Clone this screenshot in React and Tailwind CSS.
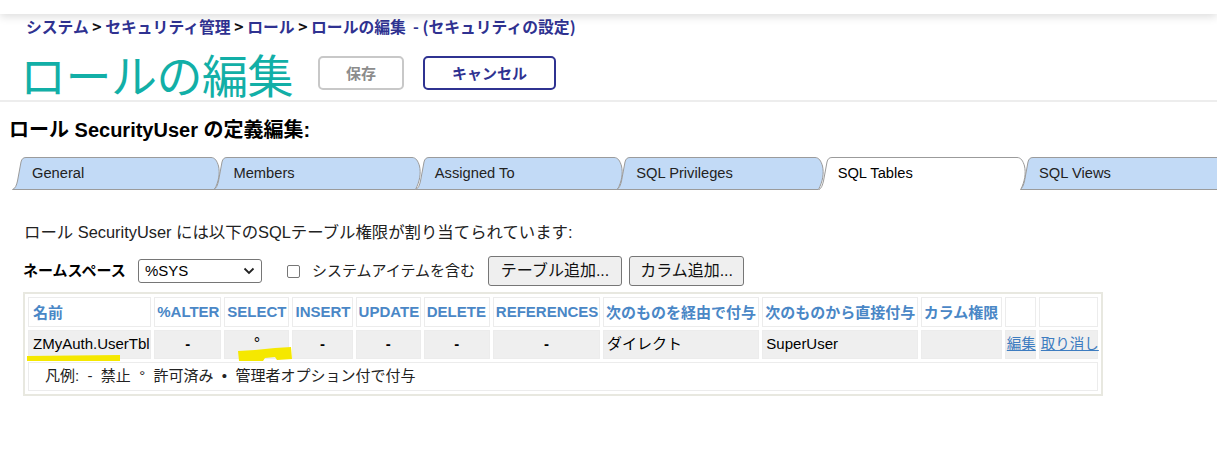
import React from "react";

const TABS = ["General", "Members", "Assigned To", "SQL Privileges", "SQL Tables", "SQL Views"];

function Tab({ label, active, first }) {
  return (
    <div
      className={`relative h-[33px] w-[211px] shrink-0 flex items-center pl-[20px] ${first ? "" : "-ml-[9.6px]"} ${active ? "z-10" : ""}`}
    >
      <svg className="absolute inset-0" width="211" height="33" viewBox="0 0 211 33">
        {active ? (
          <path
            d="M0.5,33 C3.5,31.5 4.5,28 5.5,24 L9,5 C9.8,2 11,0.5 14,0.5 L199,0.5 C203,0.5 205,4 206.5,9 C208,16 207,24 202.5,33"
            fill="#ffffff"
            stroke="#9b9b9b"
            strokeWidth="1"
          />
        ) : (
          <path
            d="M0.5,32.5 C3.5,31.5 4.5,28 5.5,24 L9,5 C9.8,2 11,0.5 14,0.5 L199,0.5 C203,0.5 205,4 206.5,9 C208,16 207,24 202.5,32.5 Z"
            fill="#c2daf6"
            stroke="#9b9b9b"
            strokeWidth="1"
          />
        )}
      </svg>
      <span className={`relative text-[14.7px] ${active ? "text-black" : "text-[#222]"}`}>{label}</span>
    </div>
  );
}

const COLS = [
  { h: "名前", w: "w-[123px]" },
  { h: "%ALTER", w: "w-[67px]" },
  { h: "SELECT", w: "w-[65px]" },
  { h: "INSERT", w: "w-[60px]" },
  { h: "UPDATE", w: "w-[65px]" },
  { h: "DELETE", w: "w-[66px]" },
  { h: "REFERENCES", w: "w-[107px]" },
  { h: "次のものを経由で付与", w: "w-[156px]" },
  { h: "次のものから直接付与", w: "w-[155px]" },
  { h: "カラム権限", w: "w-[81px]" },
  { h: "", w: "w-[31px]" },
  { h: "", w: "w-[59px]" },
];

export default function App() {
  return (
    <div className="w-[1217px] h-[453px] overflow-hidden bg-white font-['Liberation_Sans','Noto_Sans_CJK_JP',sans-serif] text-black">
      {/* top bar */}
      <div className="relative z-20 h-[14px] bg-white shadow-[0_3px_8px_rgba(0,0,0,0.13)]" />

      {/* breadcrumb */}
      <div className="h-[26px] pl-[26px] flex items-center text-[15.8px] font-bold font-['Noto_Sans_CJK_JP',sans-serif] text-[#2f3291] whitespace-pre">
        <span>システム</span>
        <span className="text-[#111]"> &gt; </span>
        <span>セキュリティ管理</span>
        <span className="text-[#111]"> &gt; </span>
        <span>ロール</span>
        <span className="text-[#111]"> &gt; </span>
        <span>ロールの編集</span>
        <span>{"  - (セキュリティの設定)"}</span>
      </div>

      {/* title row */}
      <div className="h-[60px] pt-[6px] pl-[20px] flex items-center">
        <h1 className="text-[46px] leading-none font-normal font-['Noto_Sans_CJK_JP',sans-serif] text-[#12afa7] tracking-[-0.5px]">
          ロールの編集
        </h1>
        <button className="ml-[25px] w-[86px] h-[34px] border-2 border-[#c8c8c8] rounded-[5px] bg-white text-[#8c8c8c] font-bold text-[15px] font-['Noto_Sans_CJK_JP',sans-serif] flex items-center justify-center">
          保存
        </button>
        <button className="ml-[19px] w-[133px] h-[34px] border-2 border-[#2f3291] rounded-[5px] bg-white text-[#2f3291] font-bold text-[15px] font-['Noto_Sans_CJK_JP',sans-serif] flex items-center justify-center">
          キャンセル
        </button>
      </div>

      {/* separator */}
      <div className="h-[2px] bg-[#ededed]" />

      {/* heading */}
      <div className="mt-[16px] h-[24px] pl-[9px] flex items-center text-[20px] font-bold">
        ロール SecurityUser の定義編集:
      </div>

      {/* tabs */}
      <div className="mt-[15px] pl-[12px] flex">
        {TABS.map((t, i) => (
          <Tab key={t} label={t} first={i === 0} active={t === "SQL Tables"} />
        ))}
      </div>

      {/* description */}
      <div className="mt-[30px] h-[24px] pl-[24px] flex items-center text-[16.4px] text-[#222]">
        ロール SecurityUser には以下のSQLテーブル権限が割り当てられています:
      </div>

      {/* namespace row */}
      <div className="mt-[12px] h-[30px] pl-[23px] flex items-center">
        <span className="text-[15px] font-bold w-[115px]">ネームスペース</span>
        <div className="w-[124px] h-[24px] border border-[#767676] rounded-[3px] flex items-center justify-between pl-[6px] pr-[6px] text-[15px]">
          <span>%SYS</span>
          <svg width="12" height="8" viewBox="0 0 12 8">
            <path d="M1.5,1.5 L6,6 L10.5,1.5" fill="none" stroke="#222" strokeWidth="1.8" />
          </svg>
        </div>
        <div className="ml-[25px] w-[13px] h-[13px] border border-[#767676] rounded-[2px] bg-white" />
        <span className="ml-[12px] text-[15px] text-[#222]">システムアイテムを含む</span>
        <button className="ml-[13px] w-[134px] h-[30px] bg-[#efefef] border border-[#767676] rounded-[3px] text-[16px] text-[#111] flex items-center justify-center">
          テーブル追加...
        </button>
        <button className="ml-[7px] w-[115px] h-[30px] bg-[#efefef] border border-[#767676] rounded-[3px] text-[16px] text-[#111] flex items-center justify-center">
          カラム追加...
        </button>
      </div>

      {/* table */}
      <div className="relative mt-[6px] ml-[23px] w-[1080px] border-2 border-[#e8e8e0]">
        <table className="table-fixed w-[1076px] border-separate border-spacing-[3px]">
          <thead>
            <tr>
              {COLS.map((c, i) => (
                <th
                  key={i}
                  className={`${c.w} h-[30px] border border-[#ececec] bg-white text-left align-middle whitespace-nowrap px-[2px] text-[15px] font-bold text-[#4a87c6] ${i >= 7 || i === 0 ? "font-['Noto_Sans_CJK_JP',sans-serif]" : ""} ${i === 0 ? "pl-[4px]" : ""}`}
                >
                  {c.h}
                </th>
              ))}
            </tr>
          </thead>
          <tbody>
            <tr className="text-[15px]">
              <td className="h-[29px] border border-[#ececec] bg-[#efefef] px-[4px] whitespace-nowrap">ZMyAuth.UserTbl</td>
              <td className="border border-[#ececec] bg-[#efefef] text-center font-bold">-</td>
              <td className="border border-[#ececec] bg-[#efefef] text-center align-top leading-[25px] text-[16px]">°</td>
              <td className="border border-[#ececec] bg-[#efefef] text-center font-bold">-</td>
              <td className="border border-[#ececec] bg-[#efefef] text-center font-bold">-</td>
              <td className="border border-[#ececec] bg-[#efefef] text-center font-bold">-</td>
              <td className="border border-[#ececec] bg-[#efefef] text-center font-bold">-</td>
              <td className="border border-[#ececec] bg-[#efefef] px-[3px] whitespace-nowrap">ダイレクト</td>
              <td className="border border-[#ececec] bg-[#efefef] px-[3px] whitespace-nowrap">SuperUser</td>
              <td className="border border-[#ececec] bg-[#efefef]"></td>
              <td className="border border-[#ececec] bg-[#efefef] px-[1px] whitespace-nowrap text-[14.5px]">
                <a className="text-[#3d7cc0] underline">編集</a>
              </td>
              <td className="border border-[#ececec] bg-[#efefef] px-[1px] whitespace-nowrap text-[14.5px]">
                <a className="text-[#3d7cc0] underline">取り消し</a>
              </td>
            </tr>
            <tr>
              <td colSpan={12} className="h-[29px] border border-[#ececec] bg-white pl-[16px] text-[15px] text-[#222] whitespace-pre">
                {"凡例:  -  禁止  °  許可済み  •  管理者オプション付で付与"}
              </td>
            </tr>
          </tbody>
        </table>
        {/* highlighter annotations */}
        <svg className="absolute left-0 top-0 pointer-events-none" width="300" height="80" viewBox="0 0 300 80">
          <path d="M2,62 L95,61 L95,67 L2,67 Z" fill="#f5e800" />
          <path d="M213,57 L230,56 L250,54 L266,53 L267,65 L252,66 L250,63 L240,64 L238,67 L214,67 Z" fill="#f5e800" />
        </svg>
      </div>
    </div>
  );
}
